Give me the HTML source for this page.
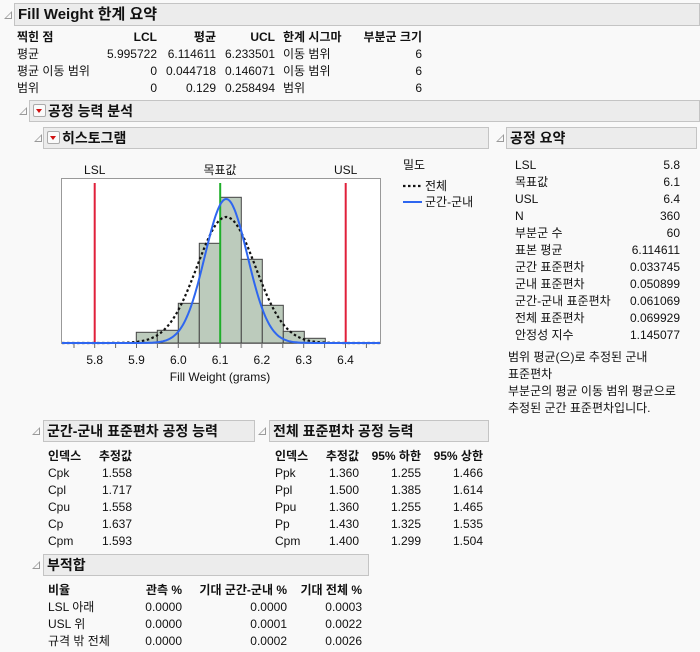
<!DOCTYPE html>
<html><head><meta charset="utf-8"><style>
body{margin:0;width:700px;height:652px;background:#f9f9f9;font-family:"Liberation Sans","Noto Sans CJK KR",sans-serif;font-size:12px;color:#111;position:relative;overflow:hidden}
.a{position:absolute;white-space:nowrap;line-height:14px}
.r{text-align:right}
.hd{position:absolute;background:#ececec;border:1px solid #c4c4c4;box-sizing:border-box;font-weight:bold;font-size:14px;line-height:20px;padding-left:3px}
.tri{position:absolute;width:0;height:0;border-left:8px solid transparent;border-bottom:8px solid #999}
.tri:after{content:"";position:absolute;left:-6px;top:2px;border-left:5px solid transparent;border-bottom:5px solid #f9f9f9}
.btn{display:inline-block;width:11px;height:11px;border:1px solid #aaa;background:#fafafa;vertical-align:-1px;margin-right:2px;position:relative;border-radius:2px}
.btn:after{content:"";position:absolute;left:2px;top:4px;border-left:3.5px solid transparent;border-right:3.5px solid transparent;border-top:4px solid #d01010}
</style></head><body>
<div class="tri" style="left:4px;top:11px"></div>
<div class="hd" style="left:14px;top:3px;width:686px;height:23px;font-size:15px;line-height:21px">Fill Weight 한계 요약</div>
<div class="a" style="left:17px;top:30px;font-weight:bold">찍힌 점</div>
<div class="a r" style="left:100px;width:57px;top:30px;font-weight:bold">LCL</div>
<div class="a r" style="left:160px;width:56px;top:30px;font-weight:bold">평균</div>
<div class="a r" style="left:220px;width:55px;top:30px;font-weight:bold">UCL</div>
<div class="a" style="left:283px;top:30px;font-weight:bold">한계 시그마</div>
<div class="a r" style="left:340px;width:82px;top:30px;font-weight:bold">부분군 크기</div>
<div class="a" style="left:17px;top:47px">평균</div><div class="a r" style="left:60px;width:97px;top:47px">5.995722</div><div class="a r" style="left:160px;width:56px;top:47px">6.114611</div><div class="a r" style="left:220px;width:55px;top:47px">6.233501</div><div class="a" style="left:283px;top:47px">이동 범위</div><div class="a r" style="left:340px;width:82px;top:47px">6</div>
<div class="a" style="left:17px;top:64px">평균 이동 범위</div><div class="a r" style="left:60px;width:97px;top:64px">0</div><div class="a r" style="left:160px;width:56px;top:64px">0.044718</div><div class="a r" style="left:220px;width:55px;top:64px">0.146071</div><div class="a" style="left:283px;top:64px">이동 범위</div><div class="a r" style="left:340px;width:82px;top:64px">6</div>
<div class="a" style="left:17px;top:81px">범위</div><div class="a r" style="left:60px;width:97px;top:81px">0</div><div class="a r" style="left:160px;width:56px;top:81px">0.129</div><div class="a r" style="left:220px;width:55px;top:81px">0.258494</div><div class="a" style="left:283px;top:81px">범위</div><div class="a r" style="left:340px;width:82px;top:81px">6</div>

<div class="tri" style="left:19px;top:107px"></div>
<div class="hd" style="left:29px;top:100px;width:671px;height:22px"><span class="btn"></span>공정 능력 분석</div>
<div class="tri" style="left:34px;top:134px"></div>
<div class="hd" style="left:43px;top:127px;width:446px;height:22px"><span class="btn"></span>히스토그램</div>
<div class="tri" style="left:496px;top:134px"></div>
<div class="hd" style="left:506px;top:127px;width:191px;height:22px">공정 요약</div>

<svg style="position:absolute;left:0;top:0" width="700" height="400">
<rect x="61.5" y="178.5" width="319" height="165" fill="#fff" stroke="#999"/>
<g fill="#bccbbc" stroke="#444" stroke-width="1">
<rect x="136.3" y="332.3" width="21" height="10.7"/><rect x="157.3" y="330.3" width="21" height="12.7"/><rect x="178.3" y="303.3" width="21" height="39.7"/><rect x="199.3" y="243.3" width="21" height="99.7"/><rect x="220.3" y="197.3" width="21" height="145.7"/><rect x="241.3" y="259.3" width="21" height="83.7"/><rect x="262.3" y="305.3" width="21" height="37.7"/><rect x="283.3" y="331.3" width="21" height="11.7"/><rect x="304.3" y="338.3" width="21" height="4.7"/>
</g>
<line x1="94.7" y1="183" x2="94.7" y2="343" stroke="#e0203a" stroke-width="2"/>
<line x1="345.7" y1="183" x2="345.7" y2="343" stroke="#e0203a" stroke-width="2"/>
<line x1="220.2" y1="183" x2="220.2" y2="343" stroke="#1fae2a" stroke-width="2"/>
<path id="dot" fill="none" stroke="#111" stroke-width="2.2" stroke-dasharray="2.5,2.5"/>
<path id="blu" fill="none" stroke="#2e66f0" stroke-width="2"/>
<g stroke="#666"><line x1="74" y1="344" x2="74" y2="348"/><line x1="94.7" y1="344" x2="94.7" y2="348"/><line x1="115.6" y1="344" x2="115.6" y2="348"/><line x1="136.5" y1="344" x2="136.5" y2="348"/><line x1="157.4" y1="344" x2="157.4" y2="348"/><line x1="178.3" y1="344" x2="178.3" y2="348"/><line x1="199.2" y1="344" x2="199.2" y2="348"/><line x1="220.1" y1="344" x2="220.1" y2="348"/><line x1="241" y1="344" x2="241" y2="348"/><line x1="261.9" y1="344" x2="261.9" y2="348"/><line x1="282.8" y1="344" x2="282.8" y2="348"/><line x1="303.7" y1="344" x2="303.7" y2="348"/><line x1="324.6" y1="344" x2="324.6" y2="348"/><line x1="345.5" y1="344" x2="345.5" y2="348"/><line x1="366.4" y1="344" x2="366.4" y2="348"/></g>
<g font-family="Liberation Sans,Noto Sans CJK KR,sans-serif" font-size="12" fill="#111" text-anchor="middle">
<text x="94.7" y="174">LSL</text><text x="220" y="174">목표값</text><text x="345.7" y="174">USL</text>
<text x="94.7" y="364">5.8</text><text x="136.5" y="364">5.9</text><text x="178.3" y="364">6.0</text><text x="220.1" y="364">6.1</text><text x="261.9" y="364">6.2</text><text x="303.7" y="364">6.3</text><text x="345.5" y="364">6.4</text>
<text x="220" y="381">Fill Weight (grams)</text>
<text x="403" y="169" text-anchor="start">밀도</text>
<text x="425" y="190" text-anchor="start">전체</text>
<text x="425" y="206" text-anchor="start">군간-군내</text>
</g>
<line x1="403" y1="186" x2="422" y2="186" stroke="#111" stroke-width="2.2" stroke-dasharray="2.5,2.5"/>
<line x1="403" y1="202" x2="422" y2="202" stroke="#2e66f0" stroke-width="2"/>
</svg>
<script>
function mk(sd,h){var d="";for(var px=62;px<=380;px+=1){var v=5.8+(px-94.7)/418;var y=343-h*Math.exp(-0.5*Math.pow((v-6.1146)/sd,2));d+=(px==62?"M":"L")+px+","+y.toFixed(1);}return d;}
document.getElementById("blu").setAttribute("d",mk(0.0509,144));
document.getElementById("dot").setAttribute("d",mk(0.0699,126));
</script>

<div class="a" style="left:515px;top:158px">LSL</div><div class="a r" style="left:600px;width:80px;top:158px">5.8</div>
<div class="a" style="left:515px;top:175px">목표값</div><div class="a r" style="left:600px;width:80px;top:175px">6.1</div>
<div class="a" style="left:515px;top:192px">USL</div><div class="a r" style="left:600px;width:80px;top:192px">6.4</div>
<div class="a" style="left:515px;top:209px">N</div><div class="a r" style="left:600px;width:80px;top:209px">360</div>
<div class="a" style="left:515px;top:226px">부분군 수</div><div class="a r" style="left:600px;width:80px;top:226px">60</div>
<div class="a" style="left:515px;top:243px">표본 평균</div><div class="a r" style="left:600px;width:80px;top:243px">6.114611</div>
<div class="a" style="left:515px;top:260px">군간 표준편차</div><div class="a r" style="left:600px;width:80px;top:260px">0.033745</div>
<div class="a" style="left:515px;top:277px">군내 표준편차</div><div class="a r" style="left:600px;width:80px;top:277px">0.050899</div>
<div class="a" style="left:515px;top:294px">군간-군내 표준편차</div><div class="a r" style="left:600px;width:80px;top:294px">0.061069</div>
<div class="a" style="left:515px;top:311px">전체 표준편차</div><div class="a r" style="left:600px;width:80px;top:311px">0.069929</div>
<div class="a" style="left:515px;top:328px">안정성 지수</div><div class="a r" style="left:600px;width:80px;top:328px">1.145077</div>
<div class="a" style="left:508px;top:350px">범위 평균(으)로 추정된 군내</div>
<div class="a" style="left:508px;top:367px">표준편차</div>
<div class="a" style="left:508px;top:384px">부분군의 평균 이동 범위 평균으로</div>
<div class="a" style="left:508px;top:401px">추정된 군간 표준편차입니다.</div>

<div class="tri" style="left:32px;top:427px"></div>
<div class="hd" style="left:43px;top:420px;width:212px;height:22px">군간-군내 표준편차 공정 능력</div>
<div class="tri" style="left:258px;top:427px"></div>
<div class="hd" style="left:269px;top:420px;width:220px;height:22px">전체 표준편차 공정 능력</div>
<div class="a" style="left:48px;top:449px;font-weight:bold">인덱스</div><div class="a r" style="left:80px;width:52px;top:449px;font-weight:bold">추정값</div>
<div class="a" style="left:48px;top:466px">Cpk</div><div class="a r" style="left:80px;width:52px;top:466px">1.558</div>
<div class="a" style="left:48px;top:483px">Cpl</div><div class="a r" style="left:80px;width:52px;top:483px">1.717</div>
<div class="a" style="left:48px;top:500px">Cpu</div><div class="a r" style="left:80px;width:52px;top:500px">1.558</div>
<div class="a" style="left:48px;top:517px">Cp</div><div class="a r" style="left:80px;width:52px;top:517px">1.637</div>
<div class="a" style="left:48px;top:534px">Cpm</div><div class="a r" style="left:80px;width:52px;top:534px">1.593</div>

<div class="a" style="left:275px;top:449px;font-weight:bold">인덱스</div><div class="a r" style="left:310px;width:49px;top:449px;font-weight:bold">추정값</div><div class="a r" style="left:360px;width:61px;top:449px;font-weight:bold">95% 하한</div><div class="a r" style="left:422px;width:61px;top:449px;font-weight:bold">95% 상한</div>
<div class="a" style="left:275px;top:466px">Ppk</div><div class="a r" style="left:310px;width:49px;top:466px">1.360</div><div class="a r" style="left:360px;width:61px;top:466px">1.255</div><div class="a r" style="left:422px;width:61px;top:466px">1.466</div>
<div class="a" style="left:275px;top:483px">Ppl</div><div class="a r" style="left:310px;width:49px;top:483px">1.500</div><div class="a r" style="left:360px;width:61px;top:483px">1.385</div><div class="a r" style="left:422px;width:61px;top:483px">1.614</div>
<div class="a" style="left:275px;top:500px">Ppu</div><div class="a r" style="left:310px;width:49px;top:500px">1.360</div><div class="a r" style="left:360px;width:61px;top:500px">1.255</div><div class="a r" style="left:422px;width:61px;top:500px">1.465</div>
<div class="a" style="left:275px;top:517px">Pp</div><div class="a r" style="left:310px;width:49px;top:517px">1.430</div><div class="a r" style="left:360px;width:61px;top:517px">1.325</div><div class="a r" style="left:422px;width:61px;top:517px">1.535</div>
<div class="a" style="left:275px;top:534px">Cpm</div><div class="a r" style="left:310px;width:49px;top:534px">1.400</div><div class="a r" style="left:360px;width:61px;top:534px">1.299</div><div class="a r" style="left:422px;width:61px;top:534px">1.504</div>

<div class="tri" style="left:32px;top:561px"></div>
<div class="hd" style="left:43px;top:554px;width:326px;height:22px">부적합</div>
<div class="a" style="left:48px;top:583px;font-weight:bold">비율</div><div class="a r" style="left:120px;width:62px;top:583px;font-weight:bold">관측 %</div><div class="a r" style="left:185px;width:102px;top:583px;font-weight:bold">기대 군간-군내 %</div><div class="a r" style="left:290px;width:72px;top:583px;font-weight:bold">기대 전체 %</div>
<div class="a" style="left:48px;top:600px">LSL 아래</div><div class="a r" style="left:120px;width:62px;top:600px">0.0000</div><div class="a r" style="left:185px;width:102px;top:600px">0.0000</div><div class="a r" style="left:290px;width:72px;top:600px">0.0003</div>
<div class="a" style="left:48px;top:617px">USL 위</div><div class="a r" style="left:120px;width:62px;top:617px">0.0000</div><div class="a r" style="left:185px;width:102px;top:617px">0.0001</div><div class="a r" style="left:290px;width:72px;top:617px">0.0022</div>
<div class="a" style="left:48px;top:634px">규격 밖 전체</div><div class="a r" style="left:120px;width:62px;top:634px">0.0000</div><div class="a r" style="left:185px;width:102px;top:634px">0.0002</div><div class="a r" style="left:290px;width:72px;top:634px">0.0026</div>
</body></html>
